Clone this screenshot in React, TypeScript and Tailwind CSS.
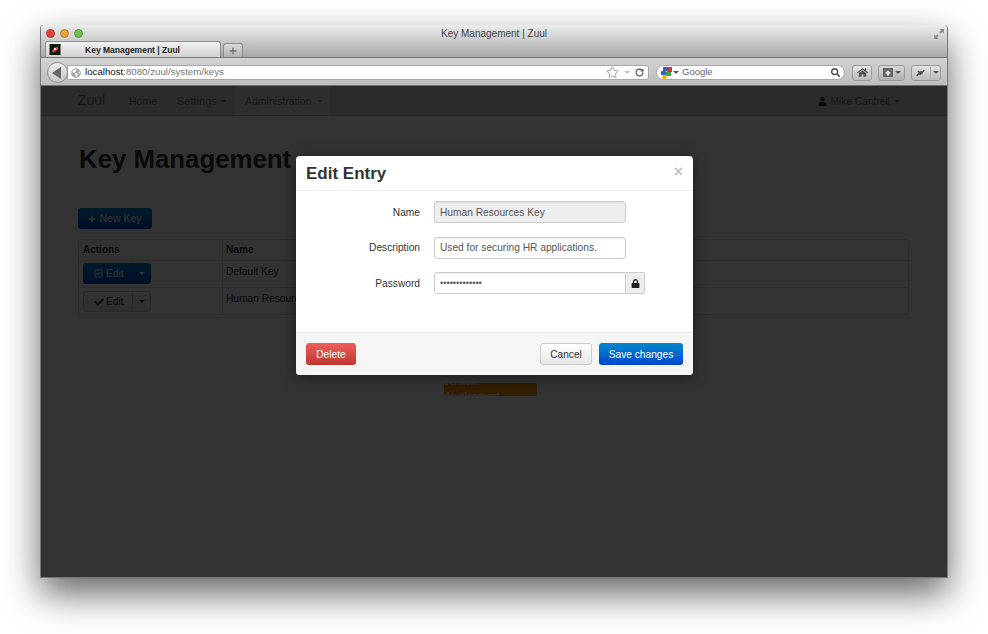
import { FC } from "react";
import { FaCheck, FaGlobeAmericas, FaHome, FaLock, FaPlus, FaRegCheckSquare, FaSearch, FaUser } from "react-icons/fa";
import { RotateCw, Star } from "lucide-react";

const font = "font-['Liberation_Sans',Arial,sans-serif]";

const Caret: FC<{ className?: string }> = ({ className = "border-t-[#777]" }) => (
  <span className={`inline-block w-0 h-0 border-x-[3px] border-x-transparent border-t-[3px] ${className}`} />
);

const Field: FC<{ label: string; value: string; disabled?: boolean; lock?: boolean }> = ({ label, value, disabled, lock }) => (
  <div className="flex items-center h-[22px] mb-[13.5px]">
    <label className="w-[124px] text-right text-[10.2px] text-[#333] pt-[1px]">{label}</label>
    <div className="flex ml-[14px]">
      <div
        className={`w-[192px] h-[22px] border border-[#ccc] rounded-[3px] px-[5px] pt-[1px] flex items-center text-[#555] shadow-[inset_0_1px_1px_rgba(0,0,0,0.075)] ${
          lock ? "text-[9.2px]" : "text-[10.2px]"
        } ${disabled ? "bg-[#eeeeee]" : "bg-white"} ${lock ? "rounded-r-none" : ""}`}
      >
        {value}
      </div>
      {lock && (
        <div className="w-[19px] h-[22px] border border-l-0 border-[#ccc] rounded-r-[3px] bg-[#eeeeee] flex items-center justify-center">
          <FaLock className="text-[#222] text-[9px]" />
        </div>
      )}
    </div>
  </div>
);

const Browser: FC = () => (
  <>
    {/* title bar and tabs */}
    <div className="h-[33px] bg-gradient-to-b from-[#ececec] to-[#a9a9a9] border-b border-[#777] rounded-t-[4px] relative flex flex-col">
      <div className="h-[16px] flex items-center pl-[5px] pr-[2px] gap-[5px] pt-[1px]">
        <span className="w-[9px] h-[9px] rounded-full bg-[#e0443e] border border-[#b5352f]" />
        <span className="w-[9px] h-[9px] rounded-full bg-[#e8a33a] border border-[#b98028]" />
        <span className="w-[9px] h-[9px] rounded-full bg-[#6fbe4e] border border-[#559a3a]" />
        <span className="flex-1 text-center text-[10px] text-[#444] pr-[28px]">Key Management | Zuul</span>
        <svg width="12" height="12" viewBox="0 0 11 11">
          <path d="M6 1h4v4L8.6 3.6 7 5.2 5.8 4 7.4 2.4zM5 10H1V6l1.4 1.4L4 5.8 5.200 7 3.600 8.600z" fill="#8a8a8a" />
        </svg>
      </div>
      <div className="flex items-end pl-[4px] gap-[2px] h-[16px]">
        <div className="w-[176px] h-[16px] bg-gradient-to-b from-[#f2f2f2] to-[#d0d0d0] border border-b-0 border-[#8a8a8a] rounded-t-[3px] flex items-center pl-[3px]">
          <svg width="12" height="11" viewBox="0 0 11 11">
            <rect width="11" height="11" fill="#0c1a10" />
            <path d="M2 7 L8 2 L9 5 L4 9z" fill="#d8322a" />
            <circle cx="5.500" cy="5" r="1.300" fill="#f4f4f4" />
          </svg>
          <span className="flex-1 text-center text-[8.5px] font-bold text-[#222] pr-[16px] pt-[1px]">Key Management | Zuul</span>
        </div>
        <div className="w-[20px] h-[14px] bg-gradient-to-b from-[#d8d8d8] to-[#b4b4b4] border border-b-0 border-[#8a8a8a] rounded-t-[3px] flex items-center justify-center">
          <FaPlus className="text-[#777] text-[8px]" />
        </div>
      </div>
    </div>

    {/* toolbar */}
    <div className="h-[28px] bg-gradient-to-b from-[#d2d2d2] to-[#bdbdbd] border-b border-[#6f6f6f] flex items-center pl-[6px] pr-[6px] pt-[2px]">
      <div className="w-[21px] h-[21px] rounded-full bg-gradient-to-b from-[#f0f0f0] to-[#c4c4c4] border border-[#8e8e8e] flex items-center justify-center z-10">
        <span className="w-0 h-0 border-y-[6px] border-y-transparent border-r-[9px] border-r-[#666] mr-[2px]" />
      </div>
      <div className="w-[582px] h-[15px] bg-white -ml-[1px] border border-[#a8a8a8] rounded-r-[3px] flex items-center pl-[3px] pr-[3px] text-[9.700px]">
        <FaGlobeAmericas className="text-[#a9a9a9] text-[10px] mr-[4px]" />
        <span className="text-[#111]">localhost</span>
        <span className="text-[#777]">:8080/zuul/system/keys</span>
        <span className="flex-1" />
        <Star size={13} className="text-[#b0b0b0] mr-[5px]" />
        <Caret className="border-t-[#c0c0c0] mr-[5px]" />
        <RotateCw size={9} className="text-[#555] mr-[1px]" strokeWidth={3} />
      </div>
      <div className="w-[189px] h-[15px] bg-white ml-[7px] border border-[#a8a8a8] rounded-full flex items-center pl-[3px] pr-[4px] text-[9.500px] text-[#666]">
        <svg width="12" height="12" viewBox="0 0 12 12">
          <rect x="1" y="4" width="5" height="4" rx="1" fill="#2f62c8" />
          <rect x="3" y="0" width="4" height="4" fill="#2f62c8" />
          <rect x="7" y="0" width="5" height="5" fill="#d8322a" />
          <rect x="6" y="5" width="5" height="4" fill="#3aa344" />
          <rect x="2" y="8" width="5" height="4" rx="2" fill="#eeb211" />
        </svg>
        <Caret className="border-t-[#555] ml-[1px] mr-[3px]" />
        <span>Google</span>
        <span className="flex-1" />
        <FaSearch className="text-[#444] text-[9px]" />
      </div>
      <div className="w-[20px] h-[16px] ml-[7px] bg-gradient-to-b from-[#e2e2e2] to-[#bcbcbc] border border-[#9a9a9a] rounded-[3px] flex items-center justify-center">
        <FaHome className="text-[#555] text-[11px]" />
      </div>
      <div className="w-[27px] h-[16px] ml-[6px] bg-gradient-to-b from-[#d6d6d6] to-[#b2b2b2] border border-[#9a9a9a] rounded-[3px] flex items-center justify-center gap-[2px]">
        <span className="w-[10px] h-[9px] bg-[#666] flex items-center justify-center">
          <span className="w-[4px] h-[4px] bg-[#ddd] rotate-45" />
        </span>
        <Caret className="border-t-[#555]" />
      </div>
      <div className="w-[30px] h-[16px] ml-[6px] bg-gradient-to-b from-[#e2e2e2] to-[#bcbcbc] border border-[#9a9a9a] rounded-[3px] flex items-center">
        <svg width="19" height="12" viewBox="0 0 19 12" className="border-r border-[#a8a8a8]">
          <path d="M5 9 L10 4 M8 8 L13 3 M6 4 L11 7" stroke="#444" strokeWidth="1.400" />
        </svg>
        <span className="flex-1 flex justify-center">
          <Caret className="border-t-[#555]" />
        </span>
      </div>
    </div>
  </>
);

const Page: FC = () => (
  <div className="flex-1 bg-white relative overflow-hidden">
    {/* navbar */}
    <div className="h-[30px] bg-[#d8d8d8] border-b border-[#c4c4c4] flex items-stretch pl-[37px] pr-[47px] text-[10.5px] text-[#777]">
      <span className="text-[14px] w-[51px] flex items-center">Zuul</span>
      <span className="w-[48px] flex items-center pt-[2px]">Home</span>
      <span className="flex items-center gap-[3px] w-[58px] pt-[1px]">
        <span className="text-[11px]">Settings</span> <Caret />
      </span>
      <span className="bg-[#e5e5e5] flex items-center gap-[5px] px-[10px] pt-[2px] w-[95px]">Administration <Caret /></span>
      <span className="flex-1" />
      <span className="flex items-center gap-[4px] pt-[2px] text-[10.2px]">
        <FaUser className="text-[#333] text-[9px]" /> Mike Cantrell
        <Caret />
      </span>
    </div>

    <div className="pl-[37px] pr-[38px]">
      <h1 className="text-[25.800px] font-bold text-[#333] leading-[30px] mt-[28px] ml-[1px]">Key Management</h1>
      <button className="mt-[34px] w-[74px] h-[21px] rounded-[3px] bg-gradient-to-b from-[#0088cc] to-[#0044cc] text-white text-[10.5px] flex items-center justify-center gap-[3px]">
        <FaPlus className="text-[8px]" /> New Key
      </button>

      {/* table */}
      <div className="mt-[10px] w-[831px] border border-[#ddd] rounded-[3px] text-[10.2px] text-[#333]">
        <div className="flex h-[20px] items-center font-bold">
          <span className="w-[144px] h-full px-[4px] pb-[1px] flex items-center border-r border-[#ddd] text-[10px]">Actions</span>
          <span className="px-[3px]">Name</span>
        </div>
        <div className="flex h-[27px] border-t border-[#ddd]">
          <div className="w-[144px] border-r border-[#ddd] pl-[4px] pt-[2px]">
            <div className="flex w-[68px] h-[21px] rounded-[3px] bg-gradient-to-b from-[#0088cc] to-[#0044cc] text-white">
              <span className="w-[50px] flex items-center pl-[11px] gap-[3px] border-r border-[#0044aa]">
                <FaRegCheckSquare className="text-[9px]" /> Edit
              </span>
              <span className="flex-1 flex items-center justify-center"><Caret className="border-t-white" /></span>
            </div>
          </div>
          <span className="px-[3px] pt-[3px]">Default Key</span>
        </div>
        <div className="flex h-[27px] border-t border-[#ddd]">
          <div className="w-[144px] border-r border-[#ddd] pl-[4px] pt-[3px]">
            <div className="flex w-[68px] h-[21px] rounded-[3px] border border-[#ccc] bg-gradient-to-b from-white to-[#e6e6e6]">
              <span className="w-[49px] flex items-center pl-[10px] gap-[2px] border-r border-[#ccc]">
                <FaCheck className="text-[10px]" /> Edit
              </span>
              <span className="flex-1 flex items-center justify-center"><Caret className="border-t-[#333]" /></span>
            </div>
          </div>
          <span className="px-[3px] pt-[3px]">Human Resources Key</span>
        </div>
      </div>

      <div className="flex justify-center mt-[68px] pr-[6px]">
        <span className="w-[93px] h-[13px] rounded-[2px] bg-[#f89406] text-white text-[9px] font-bold flex items-center justify-center">
          Version: development
        </span>
      </div>
    </div>

    {/* backdrop */}
    <div className="absolute inset-0 bg-black/80" />

    {/* modal */}
    <div className="absolute left-[255px] top-[70px] w-[397px] h-[219px] bg-white rounded-[4px] shadow-[0_2px_14px_rgba(0,0,0,0.5)] flex flex-col overflow-hidden">
      <div className="h-[35px] border-b border-[#eee] flex items-center justify-between pl-[10px] pr-[10px]">
        <h3 className="text-[17px] font-bold text-[#333] mt-[1px]">Edit Entry</h3>
        <span className="text-[16px] font-bold text-[#c4c4c4] leading-none -mt-[3px]">×</span>
      </div>
      <div className="flex-1 pt-[10px]">
        <Field label="Name" value="Human Resources Key" disabled />
        <Field label="Description" value="Used for securing HR applications." />
        <Field label="Password" value="•••••••••••••" lock />
      </div>
      <div className="h-[43px] bg-[#f5f5f5] border-t border-[#e8e8e8] flex items-center pl-[10px] pr-[10px] text-[10.2px]">
        <button className="w-[50px] h-[22px] pt-[1px] rounded-[3px] bg-gradient-to-b from-[#ee5f5b] to-[#bd362f] text-white">Delete</button>
        <span className="flex-1" />
        <button className="w-[52px] h-[22px] pt-[1px] rounded-[3px] border border-[#ccc] bg-gradient-to-b from-white to-[#e6e6e6] text-[#333]">Cancel</button>
        <button className="w-[84px] h-[22px] pt-[1px] ml-[7px] rounded-[3px] bg-gradient-to-b from-[#0088cc] to-[#0044cc] text-white">Save changes</button>
      </div>
    </div>
  </div>
);

export default function App() {
  return (
    <div className={`w-[988px] h-[634px] bg-white pt-[25px] pl-[40px] overflow-hidden ${font}`}>
      <div className="w-[908px] h-[553px] flex flex-col rounded-t-[4px] shadow-[0_16px_36px_rgba(0,0,0,0.6)] border-x border-b border-[#777]">
        <Browser />
        <Page />
      </div>
    </div>
  );
}
